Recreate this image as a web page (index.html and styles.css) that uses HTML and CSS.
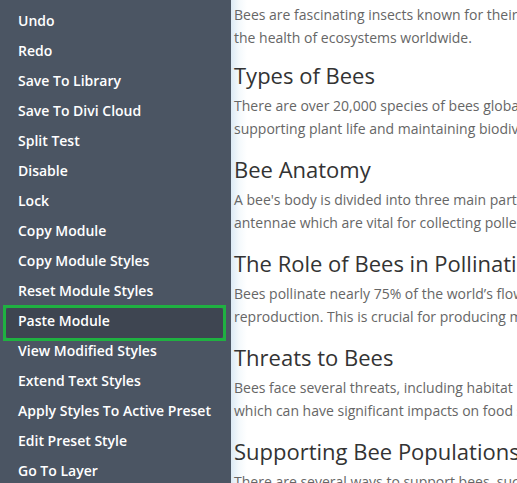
FILE: index.html
```html
<!DOCTYPE html>
<html lang="en">
<head>
<meta charset="utf-8">
<title>Bees</title>
<link rel="stylesheet" href="styles.css">
</head>
<body>
<div class="layout">
  <nav class="menu">
    <ul class="menu-list">
      <li class="menu-item">Undo</li>
      <li class="menu-item">Redo</li>
      <li class="menu-item">Save To Library</li>
      <li class="menu-item">Save To Divi Cloud</li>
      <li class="menu-item">Split Test</li>
      <li class="menu-item">Disable</li>
      <li class="menu-item">Lock</li>
      <li class="menu-item">Copy Module</li>
      <li class="menu-item">Copy Module Styles</li>
      <li class="menu-item">Reset Module Styles</li>
      <li class="menu-item is-active">Paste Module</li>
      <li class="menu-item">View Modified Styles</li>
      <li class="menu-item">Extend Text Styles</li>
      <li class="menu-item">Apply Styles To Active Preset</li>
      <li class="menu-item">Edit Preset Style</li>
      <li class="menu-item">Go To Layer</li>
    </ul>
  </nav>
  <main class="content">
    <p class="intro">Bees are fascinating insects known for their role in pollination and<br>the health of ecosystems worldwide.</p>
    <h2>Types of Bees</h2>
    <p>There are over 20,000 species of bees globally, each playing a role in<br>supporting plant life and maintaining biodiversity.</p>
    <h2>Bee Anatomy</h2>
    <p>A bee's body is divided into three main parts: the head, thorax, and abdomen, with<br>antennae which are vital for collecting pollen and sensing the environment.</p>
    <h2>The Role of Bees in Pollination</h2>
    <p>Bees pollinate nearly 75% of the world’s flowering plants, aiding in plant<br>reproduction. This is crucial for producing many fruits and vegetables.</p>
    <h2>Threats to Bees</h2>
    <p>Bees face several threats, including habitat loss, pesticides, and climate change,<br>which can have significant impacts on food security.</p>
    <h2>Supporting Bee Populations</h2>
    <p>There are several ways to support bees, such as planting native flowers.</p>
  </main>
</div>
</body>
</html>
```

FILE: styles.css
```css
html, body {
  margin: 0;
  padding: 0;
  height: 483px;
  overflow: hidden;
  background: #ffffff;
}

.layout {
  display: flex;
  height: 483px;
  overflow: hidden;
}

.menu {
  flex: 0 0 231px;
  background: #4b5563;
  padding: 8px 8px 0 6px;
  box-sizing: border-box;
}

.menu-list {
  list-style: none;
  margin: 0;
  padding: 0;
}

.menu-item {
  position: relative;
  height: 30px;
  box-sizing: border-box;
  padding: 0 0 4px 12px;
  line-height: 26px;
  font-family: "Open Sans", "Noto Sans", sans-serif;
  font-weight: 600;
  font-size: 14px;
  color: #ffffff;
  white-space: nowrap;
  border-radius: 3px;
}

.menu-item.is-active {
  background: #3e4551;
}

.menu-item.is-active::after {
  content: "";
  position: absolute;
  inset: -3px;
  border: 3px solid #1fb141;
}

.content {
  flex: 1 1 auto;
  min-width: 0;
  overflow: hidden;
  padding: 3px 0 0 3px;
  background: linear-gradient(to right, #dceaf5 0, #f4f9fc 8px, #ffffff 16px);
  font-family: "Open Sans", "Noto Sans", sans-serif;
}

.content h2 {
  margin: 0 0 4px;
  font-size: 22px;
  font-weight: 400;
  line-height: 30px;
  color: #333333;
  white-space: nowrap;
}

.content p {
  margin: 0 0 14px;
  font-size: 14px;
  line-height: 23px;
  color: #666666;
  white-space: nowrap;
}

.content p.intro {
  margin-bottom: 11px;
}
```
